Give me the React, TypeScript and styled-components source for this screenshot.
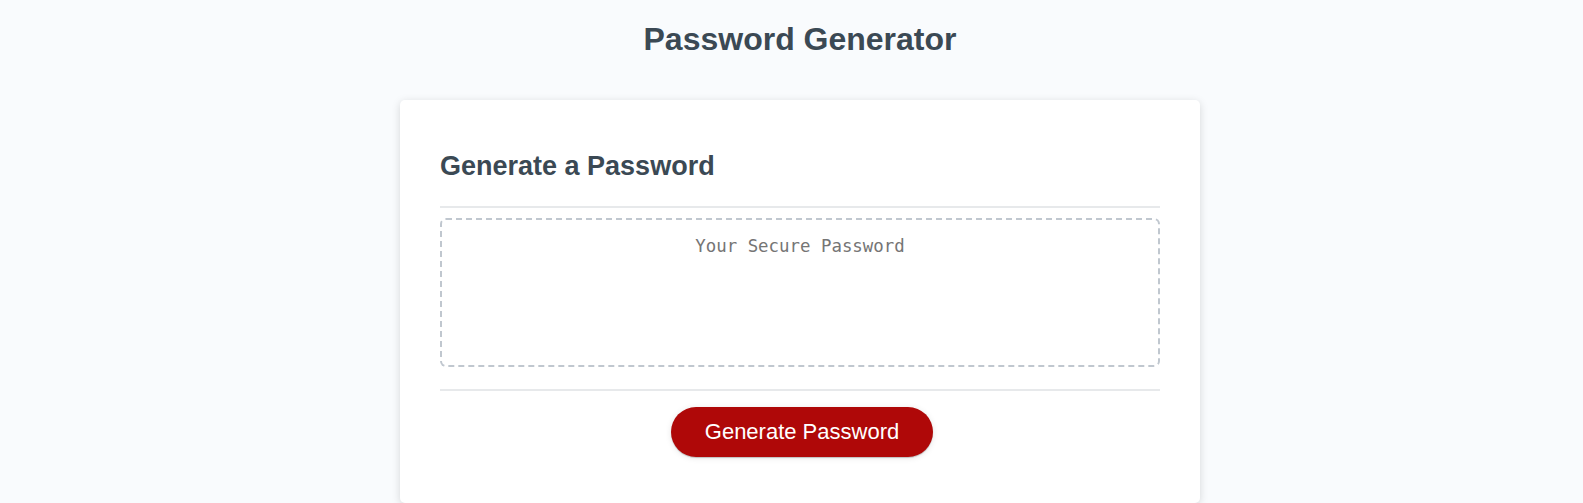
import styled, { createGlobalStyle } from "styled-components"

const GlobalStyle = createGlobalStyle`
*, *::before, *::after {
  box-sizing: border-box;
}
html, body {
  margin: 0;
  padding: 0;
  height: 100%;
}
body {
  background-color: #f9fbfd;
  font-family: "Liberation Sans", Arial, sans-serif;
  overflow: hidden;
}
`

const App = () => {
  return (
    <>
      <GlobalStyle />
      <Wrapper>
        <Header>
          <Title>Password Generator</Title>
        </Header>
        <Card>
          <CardHeader>
            <CardTitle>Generate a Password</CardTitle>
          </CardHeader>
          <Divider />
          <CardBody>
            <PasswordBox
              readOnly
              placeholder="Your Secure Password"
              aria-label="Generated Password"
            />
          </CardBody>
          <Divider />
          <CardFooter>
            <GenerateButton>Generate Password</GenerateButton>
          </CardFooter>
        </Card>
      </Wrapper>
    </>
  )
}

export default App

const Wrapper = styled.div`
padding: 0 20px 0 37px;
`

const Header = styled.header`
text-align: center;
color: hsl(206, 17%, 28%);
`

const Title = styled.h1`
margin: 0;
padding: 21px 0 42px;
font-size: 32px;
line-height: 37px;
font-weight: 700;
`

const Card = styled.section`
background-color: #fff;
border-radius: 5px;
box-shadow: rgba(0, 0, 0, 0.15) 0px 2px 8px 0px;
color: hsl(206, 17%, 28%);
font-size: 18px;
margin: 0 auto;
max-width: 800px;
padding: 30px 40px;
`

const CardHeader = styled.div`
padding: 21px 0 24px;
`

const CardTitle = styled.h2`
margin: 0;
font-size: 27px;
line-height: 31px;
font-weight: 700;
`

const Divider = styled.div`
width: 100%;
height: 2px;
background: #e7e9eb;
`

const CardBody = styled.div`
padding: 10px 0 22px;
`

const PasswordBox = styled.textarea`
appearance: none;
display: block;
width: 100%;
height: 149px;
padding: 14px 15px 0;
font-family: "DejaVu Sans Mono", "Liberation Mono", monospace;
font-size: 17.4px;
line-height: 24px;
text-align: center;
color: hsl(206, 17%, 28%);
background: #fff;
border: 2px dashed #c0c7cf;
border-radius: 6px;
resize: none;
overflow: hidden;
outline: none;

&::placeholder {
  color: #757575;
}
`

const CardFooter = styled.div`
display: flex;
justify-content: center;
`

const GenerateButton = styled.button`
border: none;
background-color: hsl(360, 91%, 36%);
border-radius: 25px;
box-shadow: rgba(0, 0, 0, 0.1) 0px 1px 6px 0px, rgba(0, 0, 0, 0.2) 0px 1px 1px 0px;
color: #fff;
font-family: "Liberation Sans", Arial, sans-serif;
font-size: 22px;
line-height: 22px;
margin: 16px 16px 16px 20px;
padding: 14px 34px;
cursor: pointer;
`
